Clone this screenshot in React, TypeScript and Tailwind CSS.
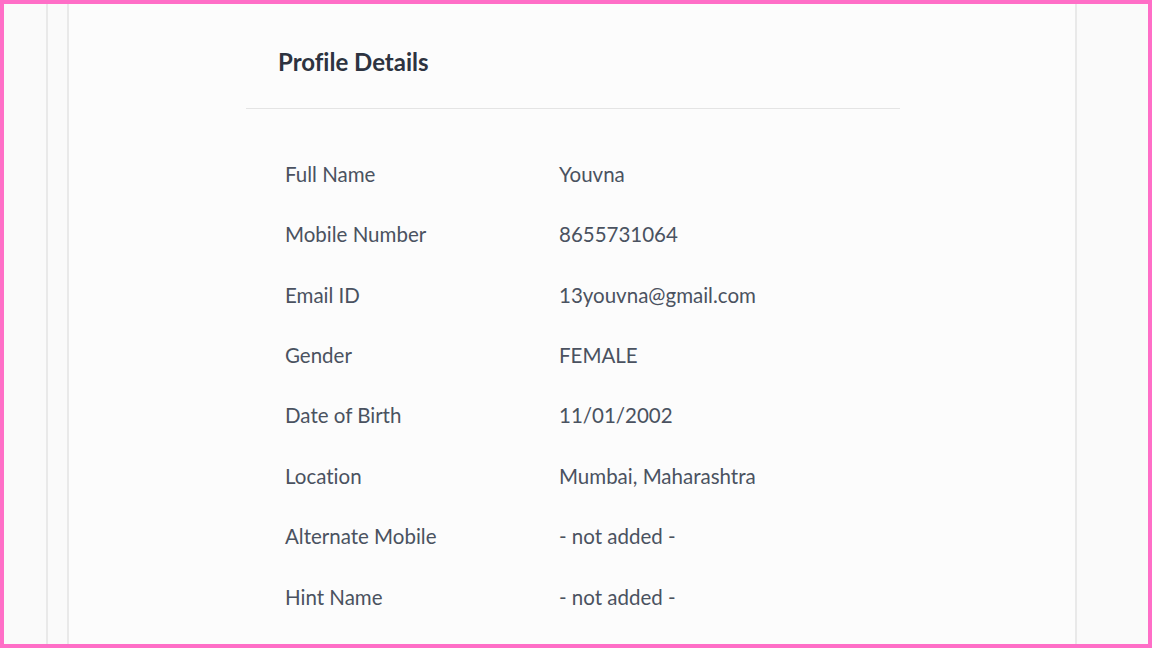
const rows: { label: string; value: string }[] = [
  { label: 'Full Name', value: 'Youvna' },
  { label: 'Mobile Number', value: '8655731064' },
  { label: 'Email ID', value: '13youvna@gmail.com' },
  { label: 'Gender', value: 'FEMALE' },
  { label: 'Date of Birth', value: '11/01/2002' },
  { label: 'Location', value: 'Mumbai, Maharashtra' },
  { label: 'Alternate Mobile', value: '- not added -' },
  { label: 'Hint Name', value: '- not added -' },
];

export default function App() {
  return (
    <div
      className="flex h-[648px] w-[1152px] overflow-hidden border-4 border-[#ff6ec7] bg-[#fafafa] [font-variant-ligatures:none]"
      style={{ fontFamily: 'Lato, "Noto Sans", sans-serif' }}
    >
      <div className="w-[42px] shrink-0" />
      <div className="w-[21px] shrink-0 border-l-2 border-[#e9e9e9]" />
      <div className="flex w-[1010px] shrink-0 border-x-2 border-[#e9e9e9] bg-[#fcfcfc]">
        <div className="ml-[177px] w-[654px] pt-[44px]">
          <div className="border-b border-[#e4e4e4] pb-[32px] pl-[32px]">
            <h2 className="text-[24px] font-bold leading-[28px] text-[#2d3340]">Profile Details</h2>
          </div>
          <div className="pt-[35px] pl-[39px]">
            {rows.map((r) => (
              <div key={r.label} className="flex h-[60.4px] items-center text-[20.5px] text-[#4a5260]">
                <div className="w-[274px]">{r.label}</div>
                <div>{r.value}</div>
              </div>
            ))}
          </div>
        </div>
      </div>
    </div>
  );
}
